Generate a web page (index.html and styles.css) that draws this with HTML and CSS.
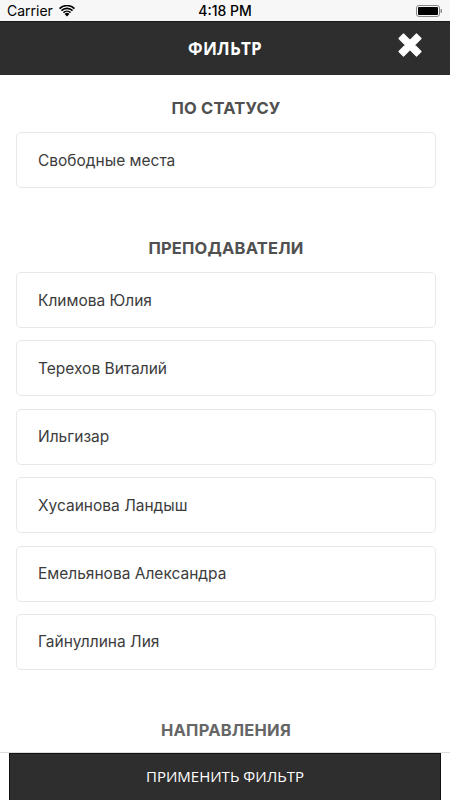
FILE: index.html
```html
<!DOCTYPE html>
<html lang="ru">
<head>
    <meta charset="UTF-8">
    <meta name="viewport" content="width=device-width, initial-scale=1.0">
    <title>Фильтр</title>
    <link rel="stylesheet" href="styles.css">
</head>
<body>
    <div class="statusbar">
        <div class="status-left">
            <span>Carrier</span>
            <svg class="wifi" width="16" height="12" viewBox="0 0 16 12">
                <path d="M8 11.5 L5.6 8.9 A3.4 3.4 0 0 1 10.4 8.9 Z" fill="#000"/>
                <path d="M3.9 7.1 A5.8 5.8 0 0 1 12.1 7.1 L11 8.2 A4.3 4.3 0 0 0 5 8.2 Z" fill="#000"/>
                <path d="M1.9 5.1 A8.6 8.6 0 0 1 14.1 5.1 L13 6.2 A7.1 7.1 0 0 0 3 6.2 Z" fill="#000"/>
                <path d="M0 3.1 A11.3 11.3 0 0 1 16 3.1 L14.9 4.2 A9.8 9.8 0 0 0 1.1 4.2 Z" fill="#000"/>
            </svg>
        </div>
        <div class="status-time">4:18 PM</div>
        <div class="status-right">
            <svg width="27" height="12" viewBox="0 0 27 12">
                <rect x="0.5" y="0.5" width="23" height="11" rx="2.5" fill="none" stroke="#888"/>
                <rect x="2" y="2" width="20" height="8" rx="1" fill="#000"/>
                <rect x="24.5" y="4" width="1.5" height="4" rx="0.7" fill="#888"/>
            </svg>
        </div>
    </div>

    <header class="navbar">
        <h1 class="nav-title">ФИЛЬТР</h1>
        <button class="close-btn" aria-label="Закрыть">
            <svg width="26" height="26" viewBox="0 0 26 26">
                <path d="M2 6.5 L6.5 2 L13 8.5 L19.5 2 L24 6.5 L17.5 13 L24 19.5 L19.5 24 L13 17.5 L6.5 24 L2 19.5 L8.5 13 Z" fill="#fff" stroke="#fff" stroke-width="1.2" stroke-linejoin="round"/>
            </svg>
        </button>
    </header>

    <main class="content">
        <section class="group">
            <h2 class="group-title">ПО СТАТУСУ</h2>
            <div class="option">Свободные места</div>
        </section>

        <section class="group">
            <h2 class="group-title">ПРЕПОДАВАТЕЛИ</h2>
            <div class="option">Климова Юлия</div>
            <div class="option">Терехов Виталий</div>
            <div class="option">Ильгизар</div>
            <div class="option">Хусаинова Ландыш</div>
            <div class="option">Емельянова Александра</div>
            <div class="option">Гайнуллина Лия</div>
        </section>

        <section class="group">
            <h2 class="group-title light">НАПРАВЛЕНИЯ</h2>
        </section>
    </main>

    <footer class="footer">
        <button class="apply-btn">ПРИМЕНИТЬ ФИЛЬТР</button>
    </footer>
</body>
</html>
```

FILE: styles.css
```css
html, body {
    margin: 0;
    padding: 0;
}
body {
    width: 450px;
    height: 800px;
    overflow: hidden;
    display: flex;
    flex-direction: column;
    background: #fff;
    font-family: "Open Sans", Arial, sans-serif;
}

/* status bar */
.statusbar {
    height: 21px;
    flex: none;
    display: flex;
    align-items: center;
    justify-content: space-between;
    padding: 0 7px;
    background: #f7f7f7;
    font-family: "Inter", "Liberation Sans", sans-serif;
    font-size: 14px;
    color: #000;
}
.status-left {
    display: flex;
    align-items: center;
    gap: 6px;
    width: 80px;
}
.status-time {
    font-weight: 500;
    font-size: 14px;
}
.status-right {
    width: 80px;
    display: flex;
    justify-content: flex-end;
    padding-top: 1px;
}

/* nav bar */
.navbar {
    height: 53px;
    flex: none;
    display: flex;
    align-items: center;
    justify-content: center;
    background: #2e2e2e;
    border-top: 1px solid #1a1a1a;
    position: relative;
}
.nav-title {
    margin: 0;
    color: #fff;
    font-size: 17px;
    font-weight: 700;
    letter-spacing: 0.2px;
}
.close-btn {
    position: absolute;
    right: 27px;
    top: 10px;
    background: none;
    border: none;
    padding: 0;
    width: 26px;
    height: 26px;
    cursor: pointer;
}

/* content */
.content {
    flex: 1;
    overflow: hidden;
    padding: 23px 14px 0 16px;
}
.group {
    margin-bottom: 50px;
}
.group-title {
    margin: 0 0 14px;
    height: 20px;
    line-height: 20px;
    text-align: center;
    font-family: "Inter", "Liberation Sans", sans-serif;
    font-size: 16.5px;
    font-weight: 700;
    letter-spacing: 0.2px;
    color: #505050;
}
.group-title.light {
    color: #666;
}
.option {
    height: 56px;
    box-sizing: border-box;
    display: flex;
    align-items: center;
    padding-left: 21px;
    margin-bottom: 12.4px;
    border: 1px solid #e8e8e8;
    border-radius: 5px;
    font-family: "Inter", "Liberation Sans", sans-serif;
    font-size: 15.5px;
    color: #3c3c3c;
}

/* footer */
.footer {
    flex: none;
    height: 47px;
    border-top: 1px solid #dcdcdc;
    padding: 0 9px;
    background: #fff;
}
.apply-btn {
    width: 100%;
    height: 48px;
    background: #2e2e2e;
    border: 1px solid #111;
    color: #fff;
    font-family: "Open Sans", Arial, sans-serif;
    font-size: 15px;
    cursor: pointer;
    padding: 0 0 2px;
}
```
